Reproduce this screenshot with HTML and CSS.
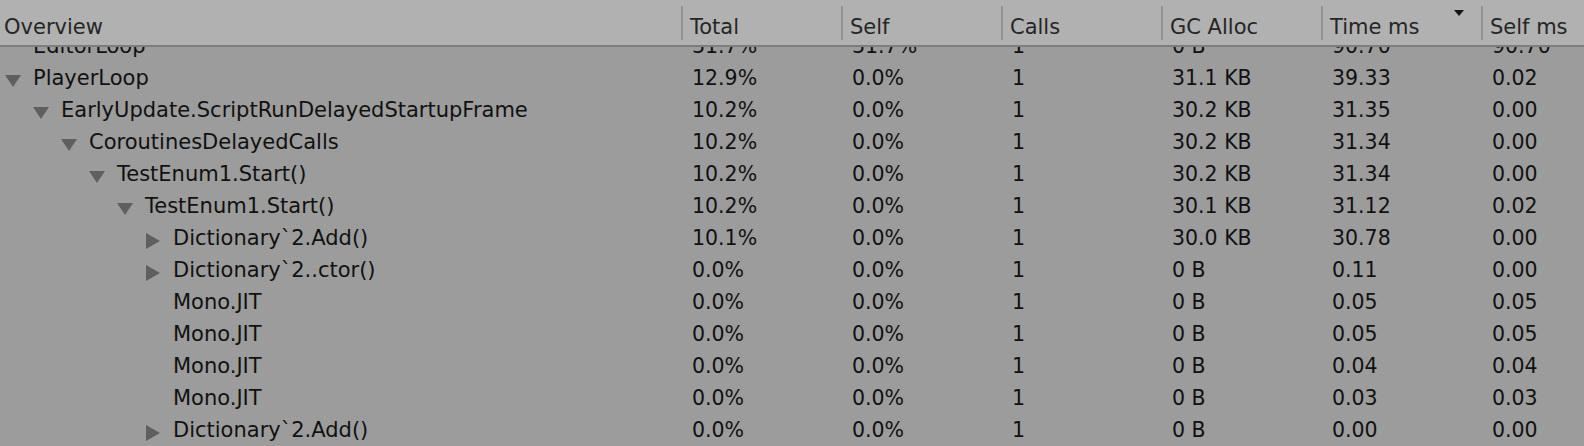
FILE: index.html
```html
<!DOCTYPE html>
<html>
<head>
<meta charset="utf-8">
<link rel="stylesheet" href="styles.css">
</head>
<body>
<div class="profiler">
  <div class="header">
    <div class="hcell first">Overview</div>
    <div class="hcell">Total</div>
    <div class="hcell">Self</div>
    <div class="hcell">Calls</div>
    <div class="hcell">GC Alloc</div>
    <div class="hcell sorted">Time ms<svg class="sort" width="10" height="6" viewBox="0 0 10 6"><polygon points="0,0 10,0 5,6"/></svg></div>
    <div class="hcell">Self ms</div>
  </div>
  <div class="viewport">
    <div class="rows">
      <div class="row"><div class="name l0"><span class="tg"></span><span>EditorLoop</span></div><div class="c">31.7%</div><div class="c">31.7%</div><div class="c">1</div><div class="c">0 B</div><div class="c">90.70</div><div class="c">90.70</div></div>
      <div class="row"><div class="name l0"><svg class="tg down" width="16" height="14" viewBox="0 0 16 14"><polygon points="0,1 16,1 8,13"/></svg><span>PlayerLoop</span></div><div class="c">12.9%</div><div class="c">0.0%</div><div class="c">1</div><div class="c">31.1 KB</div><div class="c">39.33</div><div class="c">0.02</div></div>
      <div class="row"><div class="name l1"><svg class="tg down" width="16" height="14" viewBox="0 0 16 14"><polygon points="0,1 16,1 8,13"/></svg><span>EarlyUpdate.ScriptRunDelayedStartupFrame</span></div><div class="c">10.2%</div><div class="c">0.0%</div><div class="c">1</div><div class="c">30.2 KB</div><div class="c">31.35</div><div class="c">0.00</div></div>
      <div class="row"><div class="name l2"><svg class="tg down" width="16" height="14" viewBox="0 0 16 14"><polygon points="0,1 16,1 8,13"/></svg><span>CoroutinesDelayedCalls</span></div><div class="c">10.2%</div><div class="c">0.0%</div><div class="c">1</div><div class="c">30.2 KB</div><div class="c">31.34</div><div class="c">0.00</div></div>
      <div class="row"><div class="name l3"><svg class="tg down" width="16" height="14" viewBox="0 0 16 14"><polygon points="0,1 16,1 8,13"/></svg><span>TestEnum1.Start()</span></div><div class="c">10.2%</div><div class="c">0.0%</div><div class="c">1</div><div class="c">30.2 KB</div><div class="c">31.34</div><div class="c">0.00</div></div>
      <div class="row"><div class="name l4"><svg class="tg down" width="16" height="14" viewBox="0 0 16 14"><polygon points="0,1 16,1 8,13"/></svg><span>TestEnum1.Start()</span></div><div class="c">10.2%</div><div class="c">0.0%</div><div class="c">1</div><div class="c">30.1 KB</div><div class="c">31.12</div><div class="c">0.02</div></div>
      <div class="row"><div class="name l5"><svg class="tg right" width="16" height="16" viewBox="0 0 16 16"><polygon points="1,0 15,8 1,16"/></svg><span>Dictionary`2.Add()</span></div><div class="c">10.1%</div><div class="c">0.0%</div><div class="c">1</div><div class="c">30.0 KB</div><div class="c">30.78</div><div class="c">0.00</div></div>
      <div class="row"><div class="name l5"><svg class="tg right" width="16" height="16" viewBox="0 0 16 16"><polygon points="1,0 15,8 1,16"/></svg><span>Dictionary`2..ctor()</span></div><div class="c">0.0%</div><div class="c">0.0%</div><div class="c">1</div><div class="c">0 B</div><div class="c">0.11</div><div class="c">0.00</div></div>
      <div class="row"><div class="name l5"><span class="tg"></span><span>Mono.JIT</span></div><div class="c">0.0%</div><div class="c">0.0%</div><div class="c">1</div><div class="c">0 B</div><div class="c">0.05</div><div class="c">0.05</div></div>
      <div class="row"><div class="name l5"><span class="tg"></span><span>Mono.JIT</span></div><div class="c">0.0%</div><div class="c">0.0%</div><div class="c">1</div><div class="c">0 B</div><div class="c">0.05</div><div class="c">0.05</div></div>
      <div class="row"><div class="name l5"><span class="tg"></span><span>Mono.JIT</span></div><div class="c">0.0%</div><div class="c">0.0%</div><div class="c">1</div><div class="c">0 B</div><div class="c">0.04</div><div class="c">0.04</div></div>
      <div class="row"><div class="name l5"><span class="tg"></span><span>Mono.JIT</span></div><div class="c">0.0%</div><div class="c">0.0%</div><div class="c">1</div><div class="c">0 B</div><div class="c">0.03</div><div class="c">0.03</div></div>
      <div class="row"><div class="name l5"><svg class="tg right" width="16" height="16" viewBox="0 0 16 16"><polygon points="1,0 15,8 1,16"/></svg><span>Dictionary`2.Add()</span></div><div class="c">0.0%</div><div class="c">0.0%</div><div class="c">1</div><div class="c">0 B</div><div class="c">0.00</div><div class="c">0.00</div></div>
    </div>
  </div>
</div>
</body>
</html>
```
FILE: styles.css
```css
html, body {
  margin: 0;
  padding: 0;
  background: #9c9c9c;
}
body {
  font-family: "DejaVu Sans", sans-serif;
  font-size: 21px;
  color: #111111;
}
.profiler {
  width: 1584px;
  height: 446px;
  display: flex;
  flex-direction: column;
  overflow: hidden;
}
.header {
  height: 45px;
  flex: none;
  display: grid;
  grid-template-columns: 681px repeat(5, 160px) 1fr;
  background: #b1b1b1;
  border-bottom: 2px solid #7e7e7e;
  box-sizing: content-box;
  color: #262626;
}
.hcell {
  position: relative;
  display: flex;
  align-items: center;
  padding-top: 8px;
  white-space: nowrap;
}
.hcell:not(.first)::before {
  content: "";
  position: absolute;
  left: 0;
  top: 6px;
  bottom: 5px;
  width: 2px;
  background: #929292;
}
.hcell:not(.first) {
  padding-left: 9px;
}
.hcell.first {
  padding-left: 4px;
}
.sort {
  position: absolute;
  left: 133px;
  top: 10px;
  fill: #151515;
}
.viewport {
  flex: 1;
  overflow: hidden;
}
.rows {
  margin-top: -17px;
}
.row {
  height: 32px;
  display: grid;
  grid-template-columns: 681px repeat(5, 160px) 1fr;
  align-items: center;
  white-space: nowrap;
}
.name {
  display: flex;
  align-items: center;
  gap: 12px;
}
.tg {
  width: 16px;
  flex: none;
  fill: #5f5f5f;
  margin-top: 6px;
}
.l0 { padding-left: 5px; }
.l1 { padding-left: 33px; }
.l2 { padding-left: 61px; }
.l3 { padding-left: 89px; }
.l4 { padding-left: 117px; }
.l5 { padding-left: 145px; }
.c {
  padding-left: 11px;
  font-size: 20.5px;
}
```
